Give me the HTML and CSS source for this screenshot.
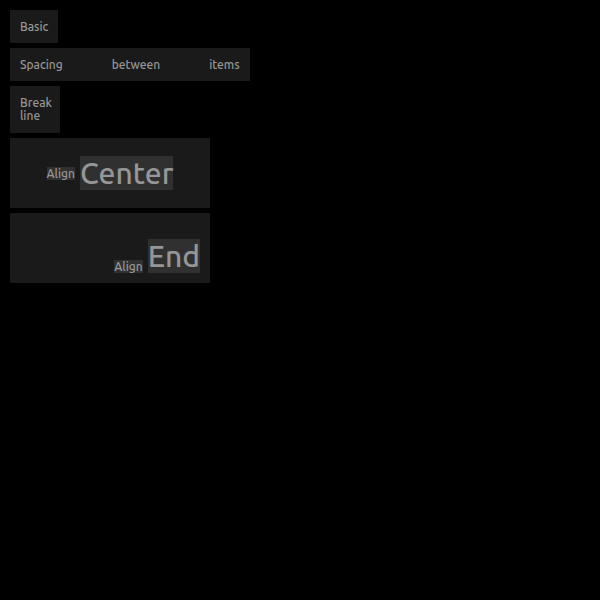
FILE: index.html
```
<!DOCTYPE html>
<html lang="en">
<head>
<meta charset="utf-8">
<title>Layout</title>
<link rel="stylesheet" href="styles.css">
</head>
<body>
<main class="stack">
  <div class="panel">Basic</div>
  <div class="panel spaced"><span>Spacing</span><span>between</span><span>items</span></div>
  <div class="panel multiline">Break<br>line</div>
  <div class="panel sized center"><span class="mark">Align</span><span class="mark large">Center</span></div>
  <div class="panel sized end"><span class="mark">Align</span><span class="mark large">End</span></div>
</main>
</body>
</html>
```

FILE: styles.css
```
* { box-sizing: border-box; }

body {
  margin: 0;
  padding: 10px;
  background: #000;
  color: #969696;
  font: 500 12px/13px Ubuntu, "Noto Sans", sans-serif;
}

.stack {
  display: flex;
  flex-direction: column;
  align-items: flex-start;
  gap: 5px;
}

.panel {
  display: flow-root;
  padding: 10px;
  background: #1a1a1a;
}

.spaced {
  display: flex;
  gap: 49px;
}

.multiline {
  width: 50px;
  min-height: 47px;
}

.sized {
  display: flex;
  gap: 5px;
  width: 200px;
  min-height: 70px;
}

.center {
  align-items: center;
  justify-content: center;
}

.end {
  align-items: flex-end;
  justify-content: flex-end;
}

.mark {
  background: #303030;
}

.large {
  font-size: 30px;
  line-height: 34px;
}
```
